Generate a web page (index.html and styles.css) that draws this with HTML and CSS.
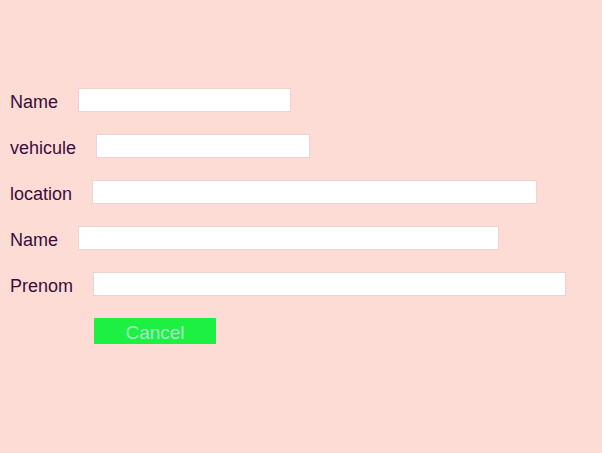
FILE: index.html
```html
<!DOCTYPE html>
<html>
<head>
<meta charset="utf-8">
<link rel="stylesheet" href="styles.css">
</head>
<body>
<form class="form">
  <div class="row"><label class="lbl">Name</label><input class="field w1" type="text"></div>
  <div class="row"><label class="lbl">vehicule</label><input class="field w2" type="text"></div>
  <div class="row"><label class="lbl">location</label><input class="field w3" type="text"></div>
  <div class="row"><label class="lbl">Name</label><input class="field w4" type="text"></div>
  <div class="row"><label class="lbl">Prenom</label><input class="field w5" type="text"></div>
  <div class="row"><button class="btn" type="button">Cancel</button></div>
</form>
</body>
</html>
```

FILE: styles.css
```css
html, body {
  margin: 0;
  padding: 0;
  background: #fedcd6;
  height: 100%;
}
body {
  font-family: "Liberation Sans", Arial, sans-serif;
}
.form {
  display: flex;
  flex-direction: column;
  gap: 22px;
  padding: 88px 0 0 10px;
}
.row {
  display: flex;
  align-items: center;
  gap: 20px;
  height: 24px;
}
.lbl {
  font-size: 18px;
  color: #3a0c3c;
  margin-top: 5px;
}
.field {
  box-sizing: border-box;
  height: 24px;
  margin: 0;
  padding: 0 4px;
  border: 1px solid #eed3d0;
  background: #ffffff;
  outline: none;
}
.w1 { width: 213px; }
.w2 { width: 214px; }
.w3 { width: 445px; }
.w4 { width: 421px; }
.w5 { width: 473px; }
.btn {
  margin-left: 84px;
  width: 122px;
  height: 26px;
  border: none;
  padding: 3px 0 0;
  background: #1ef043;
  color: #a6e8c4;
  font-family: "Liberation Sans", Arial, sans-serif;
  font-size: 19px;
  line-height: 23px;
  align-self: flex-start;
}
```
